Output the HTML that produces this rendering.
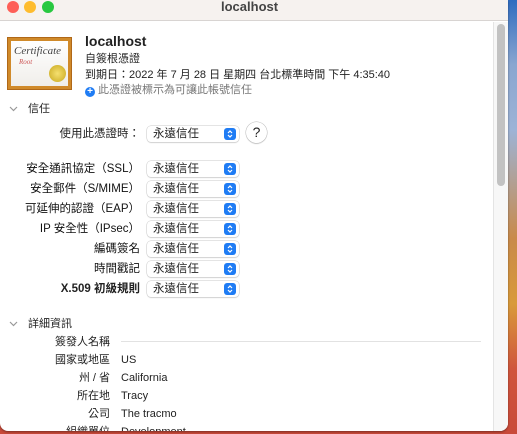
<!DOCTYPE html>
<html><head><meta charset="utf-8"><style>
*{margin:0;padding:0;box-sizing:border-box}
body{width:517px;height:434px;overflow:hidden;position:relative;font-family:"Liberation Sans","Noto Sans CJK TC",sans-serif;font-size:11px;color:#222;background:linear-gradient(180deg,#2f6cc0 0%,#8aa6d0 15%,#9db3d6 30%,#c98a4a 55%,#d99a3a 70%,#d0553c 85%,#c94a3a 100%)}
.win{position:absolute;left:0;top:0;width:508px;height:431px;background:#fff;border-radius:0 0 8px 8px;overflow:hidden;box-shadow:0 1px 2px rgba(0,0,0,.4)}
.tb{position:absolute;left:0;top:0;width:508px;height:21px;background:#f6f2ef;border-bottom:1px solid #d8d4d2}
.dot{position:absolute;top:1px;width:12px;height:12px;border-radius:50%}
.t{position:absolute;white-space:nowrap;line-height:16px}
.pop{position:absolute;left:147px;width:92px;height:16px;border-radius:4px;background:#fff;box-shadow:0 0 0 .5px #c8c8c8,0 1px 1px rgba(0,0,0,.15);padding-left:6px;line-height:16px;font-size:11.5px}
.pop svg{position:absolute;right:3px;top:2px}
.lab{position:absolute;right:368px;white-space:nowrap;font-size:11.5px;line-height:16px}
.lab.s{color:#111}
.b{font-weight:bold}
.k{position:absolute;right:398px;white-space:nowrap;font-size:11px;line-height:16px}
.v{position:absolute;left:121px;white-space:nowrap;font-size:11px;line-height:16px}
</style></head><body>
<div class="win">
<div class="tb">
<div class="dot" style="left:7px;background:#fe5f57"></div>
<div class="dot" style="left:24px;background:#febc2e"></div>
<div class="dot" style="left:42px;background:#28c840"></div>
<div class="t" style="left:221px;top:-1px;font-weight:bold;font-size:13px;color:#444">localhost</div>
</div>
<div style="position:absolute;left:7px;top:37px;width:65px;height:53px;background:#d08a2a;border:1px solid #b06818;padding:3px">
<div style="width:100%;height:100%;background:linear-gradient(#fff,#f0eeea);position:relative">
<div style="position:absolute;left:3px;top:4px;font-family:'Liberation Serif',serif;font-style:italic;font-size:11px;color:#444">Certificate</div>
<div style="position:absolute;left:8px;top:17px;font-family:'Liberation Serif',serif;font-style:italic;font-size:7px;color:#c55">Root</div>
<div style="position:absolute;left:38px;top:24px;width:17px;height:17px;border-radius:50%;background:radial-gradient(#f5e070,#c9a81e)"></div>
</div></div>
<div class="t b" style="left:85px;top:33px;font-size:14px">localhost</div>
<div class="t" style="left:85px;top:51px">自簽根憑證</div>
<div class="t" style="left:85px;top:67px">到期日：2022 年 7 月 28 日 星期四 台北標準時間 下午 4:35:40</div>
<div class="t" style="left:85px;top:82px;color:#777"><span style="display:inline-block;width:10px;height:10px;border-radius:50%;background:#1f7cf4;color:#fff;font-size:10px;line-height:10px;text-align:center;font-weight:bold;vertical-align:-1px">+</span> 此憑證被標示為可讓此帳號信任</div>
<svg style="position:absolute;left:9px;top:106px" width="9" height="6"><path d="M1 1 L4.5 4.5 L8 1" fill="none" stroke="#999" stroke-width="1.2"/></svg>
<div class="t" style="left:28px;top:101px">信任</div>
<div class="lab" style="top:126px">使用此憑證時：</div>
<div class="pop" style="top:126px">永遠信任<svg width="12" height="12"><rect width="12" height="12" rx="3" fill="#1f7cf4"/><path d="M4 5 L6 3 L8 5 M4 7 L6 9 L8 7" fill="none" stroke="#fff" stroke-width="1.2"/></svg></div>
<div style="position:absolute;left:246px;top:122px;width:21px;height:21px;border-radius:50%;background:#fff;box-shadow:0 0 0 .5px #bbb,0 1px 1px rgba(0,0,0,.2);text-align:center;line-height:21px;font-size:14px">?</div>
<div class="lab s" style="top:161px">安全通訊協定（SSL）</div><div class="pop" style="top:161px">永遠信任<svg width="12" height="12"><rect width="12" height="12" rx="3" fill="#1f7cf4"/><path d="M4 5 L6 3 L8 5 M4 7 L6 9 L8 7" fill="none" stroke="#fff" stroke-width="1.2"/></svg></div>
<div class="lab s" style="top:181px">安全郵件（S/MIME）</div><div class="pop" style="top:181px">永遠信任<svg width="12" height="12"><rect width="12" height="12" rx="3" fill="#1f7cf4"/><path d="M4 5 L6 3 L8 5 M4 7 L6 9 L8 7" fill="none" stroke="#fff" stroke-width="1.2"/></svg></div>
<div class="lab s" style="top:201px">可延伸的認證（EAP）</div><div class="pop" style="top:201px">永遠信任<svg width="12" height="12"><rect width="12" height="12" rx="3" fill="#1f7cf4"/><path d="M4 5 L6 3 L8 5 M4 7 L6 9 L8 7" fill="none" stroke="#fff" stroke-width="1.2"/></svg></div>
<div class="lab s" style="top:221px">IP 安全性（IPsec）</div><div class="pop" style="top:221px">永遠信任<svg width="12" height="12"><rect width="12" height="12" rx="3" fill="#1f7cf4"/><path d="M4 5 L6 3 L8 5 M4 7 L6 9 L8 7" fill="none" stroke="#fff" stroke-width="1.2"/></svg></div>
<div class="lab s" style="top:241px">編碼簽名</div><div class="pop" style="top:241px">永遠信任<svg width="12" height="12"><rect width="12" height="12" rx="3" fill="#1f7cf4"/><path d="M4 5 L6 3 L8 5 M4 7 L6 9 L8 7" fill="none" stroke="#fff" stroke-width="1.2"/></svg></div>
<div class="lab s" style="top:261px">時間戳記</div><div class="pop" style="top:261px">永遠信任<svg width="12" height="12"><rect width="12" height="12" rx="3" fill="#1f7cf4"/><path d="M4 5 L6 3 L8 5 M4 7 L6 9 L8 7" fill="none" stroke="#fff" stroke-width="1.2"/></svg></div>
<div class="lab b" style="top:281px">X.509 初級規則</div><div class="pop" style="top:281px">永遠信任<svg width="12" height="12"><rect width="12" height="12" rx="3" fill="#1f7cf4"/><path d="M4 5 L6 3 L8 5 M4 7 L6 9 L8 7" fill="none" stroke="#fff" stroke-width="1.2"/></svg></div>
<svg style="position:absolute;left:9px;top:321px" width="9" height="6"><path d="M1 1 L4.5 4.5 L8 1" fill="none" stroke="#999" stroke-width="1.2"/></svg>
<div class="t" style="left:28px;top:316px">詳細資訊</div>
<div class="k" style="top:334px">簽發人名稱</div>
<div style="position:absolute;left:121px;top:341px;width:360px;height:1px;background:#e2e2e2"></div>
<div class="k" style="top:352px">國家或地區</div><div class="v" style="top:352px">US</div>
<div class="k" style="top:370px">州 / 省</div><div class="v" style="top:370px">California</div>
<div class="k" style="top:388px">所在地</div><div class="v" style="top:388px">Tracy</div>
<div class="k" style="top:406px">公司</div><div class="v" style="top:406px">The tracmo</div>
<div class="k" style="top:424px">組織單位</div><div class="v" style="top:424px">Development</div>
<div style="position:absolute;left:493px;top:22px;width:15px;height:409px;background:#f7f7f7;border-left:1px solid #e4e4e4"></div>
<div style="position:absolute;left:497px;top:24px;width:8px;height:162px;border-radius:4px;background:#c2c2c2"></div>
</div>
</body></html>
